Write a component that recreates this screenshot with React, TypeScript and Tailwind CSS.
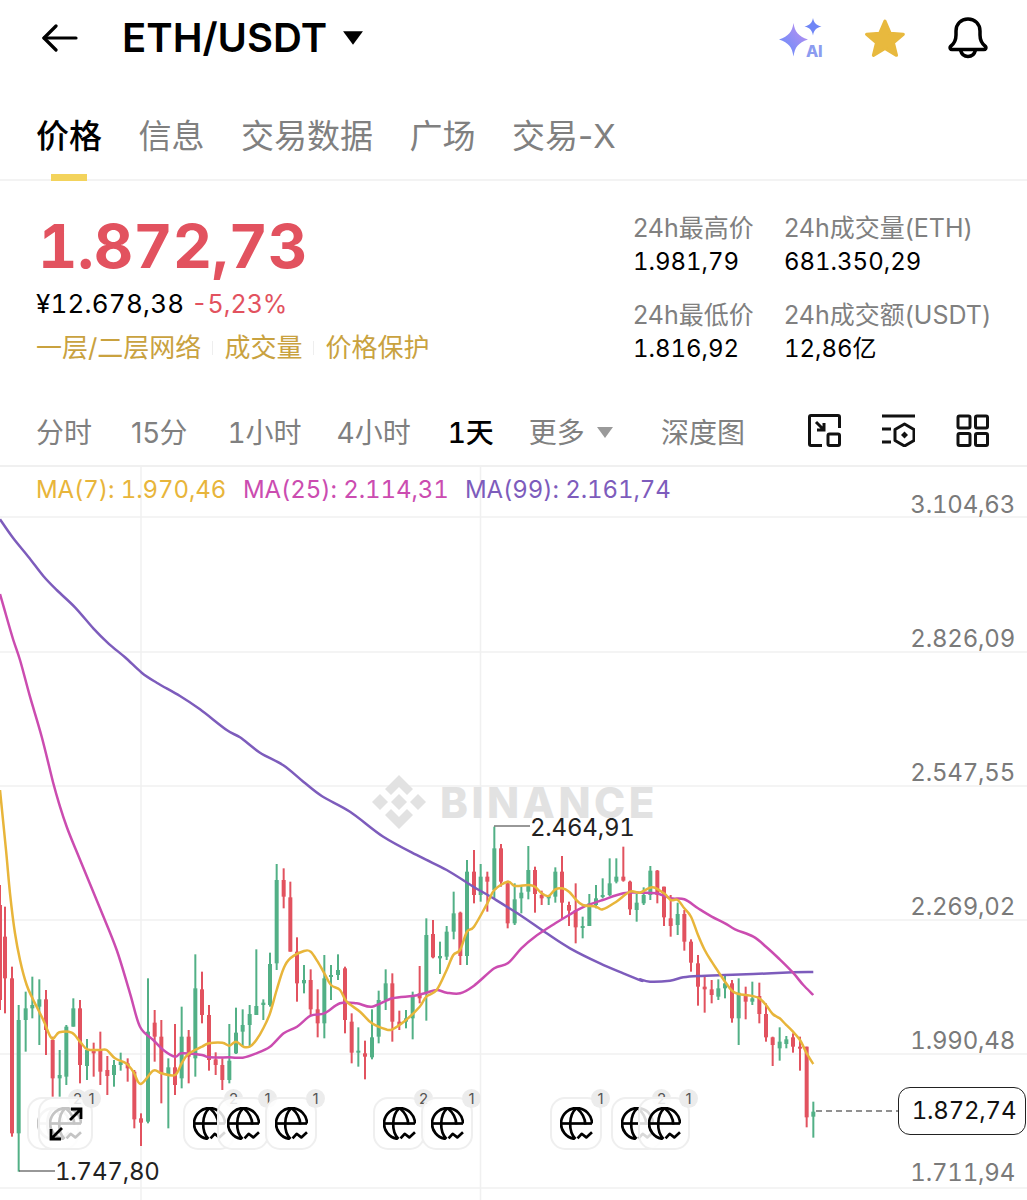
import React from "react";

type C = [number, number, number, number, number, "r" | "g"];

const RED = "#e2525f";
const GREEN = "#52b086";

// Candles as [x, wickTop, wickBottom, bodyTop, bodyBottom, colour] read from three chart crops
const part1: C[] = [
  [15,170,490,260,385,"r"],[36,350,860,385,850,"r"],[56,465,965,510,850,"g"],[77,425,605,475,510,"g"],[97,380,505,465,475,"g"],[118,388,585,448,470,"g"],
  [138,420,615,448,540,"r"],[158,560,740,570,685,"r"],[179,600,740,675,685,"g"],[199,525,705,530,680,"g"],[220,445,530,475,530,"g"],[240,450,700,475,645,"r"],
  [261,567,690,600,648,"g"],[281,578,680,603,610,"r"],[301,545,705,600,665,"r"],[322,618,735,660,678,"r"],[342,630,710,645,675,"g"],[362,608,662,635,645,"g"],
  [383,625,695,640,655,"r"],[403,660,835,665,808,"r"],[423,790,888,805,818,"r"],[444,385,820,545,815,"g"],[464,480,635,518,560,"r"],[484,510,760,560,672,"r"],
  [505,625,835,652,675,"g"],[525,522,735,652,705,"r"],[545,470,715,560,685,"g"],[566,540,700,560,620,"r"],[586,313,680,415,625,"g"],[606,365,520,418,495,"r"],
  [627,465,662,495,630,"r"],[647,607,675,628,645,"r"],[667,625,720,645,690,"r"],[688,522,700,632,690,"g"],[708,473,612,548,610,"g"],[728,478,590,525,545,"g"],
  [749,465,590,492,525,"g"],[769,298,495,468,495,"g"],[790,448,510,458,465,"g"],[810,308,470,342,465,"g"],[830,42,360,90,340,"g"],[851,55,175,90,140,"r"],
  [871,95,305,142,305,"r"],[891,262,455,305,400,"r"],[912,345,430,390,400,"g"],[932,358,495,390,478,"r"],[953,418,562,478,520,"r"],[973,315,565,385,520,"g"],
  [993,345,450,375,380,"g"],[1014,313,390,360,375,"g"],
];
const part2: C[] = [
  [15,440,640,445,600,"r"],[35,580,730,605,698,"r"],[55,622,740,692,698,"g"],[75,662,778,700,710,"r"],[96,568,718,652,712,"g"],[116,512,670,540,650,"g"],
  [137,448,570,490,540,"g"],[157,460,665,490,605,"r"],[178,572,630,605,615,"r"],[198,570,625,595,605,"g"],[218,515,658,525,595,"g"],[239,438,550,520,535,"r"],
  [259,295,602,345,520,"g"],[279,300,415,342,412,"r"],[300,365,462,408,415,"g"],[320,318,420,335,410,"g"],[341,215,358,280,335,"g"],[361,275,435,278,408,"r"],
  [381,120,435,155,408,"g"],[402,90,250,155,225,"r"],[422,132,245,170,225,"g"],[442,155,275,170,185,"r"],[463,20,235,85,210,"g"],[483,72,200,85,185,"r"],
  [503,182,325,190,310,"r"],[524,190,315,238,310,"g"],[544,195,280,218,235,"g"],[565,78,238,150,215,"g"],[585,140,278,150,222,"r"],[605,212,255,225,235,"r"],
  [626,225,255,228,235,"g"],[646,142,248,155,230,"g"],[666,108,300,155,248,"r"],[687,245,318,255,272,"r"],[707,190,370,270,322,"r"],[728,290,355,318,322,"g"],
  [748,222,318,250,318,"g"],[768,195,265,235,255,"g"],[788,175,235,225,230,"g"],[809,115,228,190,225,"g"],[829,115,190,170,185,"g"],[850,80,185,170,182,"r"],
  [870,182,285,185,268,"r"],[890,222,305,248,270,"g"],
];
const part3: C[] = [
  [11,142,195,165,190,"g"],[31,78,180,92,165,"g"],[52,90,190,92,165,"r"],[72,140,258,140,232,"r"],[92,165,290,235,258,"r"],[113,188,285,222,255,"g"],
  [133,210,332,222,305,"r"],[153,298,395,305,368,"r"],[174,345,497,370,440,"r"],[194,405,518,440,448,"r"],[215,420,490,448,465,"r"],[235,418,480,445,470,"g"],
  [255,405,475,430,445,"g"],[276,420,548,430,535,"r"],[296,415,615,458,535,"g"],[317,440,538,468,485,"r"],[337,425,495,475,485,"g"],[358,428,550,468,522,"r"],
  [378,490,605,522,592,"r"],[398,590,678,592,615,"r"],[419,562,662,605,625,"g"],[439,588,625,598,612,"g"],[459,580,638,592,620,"r"],[480,590,692,620,625,"r"],
  [500,620,862,620,832,"r"],[520,785,893,815,830,"g"],
];

const map = (rows: C[], ox: number, oy: number): C[] =>
  rows.map(([x, a, b, c, d, k]) => [ox + x / 3, oy + a / 3, oy + b / 3, oy + c / 3, oy + d / 3, k]);

const candles: C[] = [
  [0, 885, 1010, 905, 1000, "r"],
  ...map(part1, 0, 850),
  ...map(part2, 340, 820),
  ...map(part3, 640, 840),
];

const pts = (rows: number[][], ox: number, oy: number) => rows.map(([x, y]) => [ox + x / 3, oy + y / 3]);

// Smooth line through the points (Catmull-Rom to Bezier)
const smooth = (p: number[][]) => {
  let d = `M${p[0][0].toFixed(1)} ${p[0][1].toFixed(1)}`;
  for (let i = 0; i < p.length - 1; i++) {
    const a = p[Math.max(i - 1, 0)];
    const b = p[i];
    const c = p[i + 1];
    const e = p[Math.min(i + 2, p.length - 1)];
    const c1x = b[0] + (c[0] - a[0]) / 6;
    const c1y = b[1] + (c[1] - a[1]) / 6;
    const c2x = c[0] - (e[0] - b[0]) / 6;
    const c2y = c[1] - (e[1] - b[1]) / 6;
    d += `C${c1x.toFixed(1)} ${c1y.toFixed(1)} ${c2x.toFixed(1)} ${c2y.toFixed(1)} ${c[0].toFixed(1)} ${c[1].toFixed(1)}`;
  }
  return d;
};

const yellow = [
  ...pts([[0,870],[18,1050]],0,500),
  ...pts([[30,130],[45,250],[60,330],[80,405],[100,450],[130,510],[155,565],[178,547],[215,548],[240,575],[262,598],[300,600],[320,600],[345,625],[378,640],[400,665],[422,702],[460,662],[484,670],[525,675],[545,640],[565,612],[606,590],[627,580],[667,578],[688,587],[708,575],[730,590],[749,590],[769,570],[790,535],[810,490],[830,420],[851,355],[871,325],[912,303],[932,305],[953,335],[973,370],[993,405]],0,850),
  ...pts([[0,510],[20,545],[60,575],[96,610],[137,628],[157,628],[198,600],[239,560],[259,530],[290,510],[320,450],[340,405],[360,390],[381,335],[402,320],[442,250],[463,210],[503,185],[524,198],[565,195],[585,200],[605,220],[626,228],[646,208],[666,205],[687,215],[707,238],[728,255],[768,260],[788,268],[829,245],[870,215]],340,820),
  ...pts([[0,158],[37,142],[72,160],[92,180],[113,180],[133,205],[153,230],[174,285],[194,330],[215,365],[235,395],[255,425],[276,452],[296,462],[317,465],[337,468],[358,475],[378,495],[398,522],[419,535],[439,555],[459,575],[480,600],[500,640],[520,672]],640,840),
];
const magenta = [
  ...pts([[0,282],[18,345],[40,420],[60,480],[90,590],[125,710],[160,850],[180,920],[200,980]],0,500),
  ...pts([[228,0],[300,175],[350,300],[390,430],[420,530],[460,570],[490,600],[525,620],[545,610],[606,615],[627,622],[688,622],[728,623],[769,610],[810,590],[851,550],[891,530],[932,497],[973,490]],0,850),
  ...pts([[0,550],[50,550],[96,560],[157,535],[218,528],[259,518],[290,510],[320,518],[361,520],[402,497],[463,445],[503,430],[544,385],[585,350],[646,310],[687,285],[728,262],[788,240],[850,220]],340,820),
  ...pts([[0,158],[50,160],[92,175],[133,178],[174,205],[215,230],[255,250],[285,268],[340,290],[378,320],[419,358],[459,398],[490,435],[520,465]],640,840),
];
const purple = [
  ...pts([[0,58],[40,115],[85,170],[130,228],[170,270],[225,322],[280,385],[325,430],[375,472],[425,518],[470,548],[540,588],[600,628],[680,690],[720,712],[780,758],[850,796],[910,845],[965,888],[1050,935]],0,500),
  ...pts([[130,50],[240,110],[320,150],[400,200],[460,235],[540,285],[620,340],[690,385],[780,430],[850,460],[905,482]],340,820),
  ...pts([[0,418],[30,425],[90,422],[130,412],[174,408],[255,405],[340,402],[459,397],[520,396]],640,840),
];

const gridY = [517, 652, 786, 920, 1054, 1188];
const axis = [
  ["3.104,63", 505], ["2.826,09", 639], ["2.547,55", 773], ["2.269,02", 907], ["1.990,48", 1041], ["1.711,94", 1173],
] as const;

function Globe({ faded }: { faded?: boolean }) {
  return (
    <svg width="33" height="33" viewBox="0 0 32 32" fill="none" stroke={faded ? "#c4c4c4" : "#000"} strokeWidth="2.600">
      <path d="M31 16A15 15 0 1 0 14 30.900" />
      <path d="M16 1C8 8 8 24 15 31" />
      <path d="M16 1C22 6 24.500 12 24.500 17" />
      <path d="M1.500 16H31" />
      <path d="M17 30.500L21 26L25.500 29.500L31 24.500" strokeLinejoin="round" />
    </svg>
  );
}

function GlobeButton({ left, width = 52, faded, badge }: { left: number; width?: number; faded?: boolean; badge: number }) {
  return (
    <div
      className="absolute top-[630px] flex h-[53px] items-center justify-center rounded-[15px] border-2 border-[#efefef] bg-white/85"
      style={{ left, width }}
    >
      <Globe faded={faded} />
      <div className="absolute right-[-10px] top-[-10px] flex h-[19px] w-[19px] items-center justify-center rounded-full bg-[#ececec] text-[15px] leading-none text-[#555]">
        {badge}
      </div>
    </div>
  );
}

export default function App() {
  return (
    <div className="h-[1200px] w-[1027px] overflow-hidden bg-white font-['Inter','Noto_Sans_CJK_SC',sans-serif] text-black">
      {/* Header */}
      <header className="flex h-[76px] items-center pl-[42px] pr-[39px]">
        <svg width="36" height="28" viewBox="0 0 36 28" fill="none" stroke="#000" strokeWidth="3.200" strokeLinecap="round" strokeLinejoin="round">
          <path d="M14 2L2 14L14 26" />
          <path d="M2 14H34" />
        </svg>
        <h1 className="ml-[44px] text-[40px] font-semibold leading-none">ETH/USDT</h1>
        <svg className="ml-[15px]" width="22" height="16" viewBox="0 0 21 15">
          <path d="M1 1H20L10.500 14Z" fill="#000" />
        </svg>
        <div className="ml-auto flex items-center">
          <div className="relative h-[40px] w-[44px]">
            <svg width="44" height="40" viewBox="0 0 44 40">
              <defs>
                <linearGradient id="ai" x1="0" y1="1" x2="1" y2="0">
                  <stop offset="0" stopColor="#5e8cfc" />
                  <stop offset="1" stopColor="#c490ee" />
                </linearGradient>
              </defs>
              <path d="M14.500 5C16 14 19 18 29 21.500C19 25 16 29 14.500 38.500C13 29 10 25 0 21.500C10 18 13 14 14.500 5Z" fill="url(#ai)" />
              <path d="M34 0C35 5 37 7 42.500 8.500C37 10 35 12 34 17.500C33 12 31 10 25.500 8.500C31 7 33 5 34 0Z" fill="#6f86f6" />
            </svg>
            <span className="absolute bottom-[-1px] right-[1px] text-[16px] font-extrabold leading-none tracking-[-0.5px] text-[#8c9cf0]">AI</span>
          </div>
          <svg className="ml-[41px]" width="44" height="40" viewBox="1 0 42 38">
            <path d="M21 3L26 14.500L38.500 15.500L29 23.500L32 35.500L21 29L10 35.500L13 23.500L3.500 15.500L16 14.500Z" fill="#e8b93e" stroke="#e8b93e" strokeWidth="3" strokeLinejoin="round" />
          </svg>
          <svg className="ml-[40px]" width="40" height="42" viewBox="0 0 40 42" fill="none" stroke="#000" strokeWidth="3.500" strokeLinejoin="round">
            <path d="M2.500 29.500C6.500 26.500 8 23 8 18V14C8 7 13 2 20 2C27 2 32 7 32 14V18C32 23 33.500 26.500 37.500 29.500C38.500 31 37.500 32.500 36 32.500H4C2.500 32.500 1.500 31 2.500 29.500Z" />
            <path d="M12.500 33C13.500 37 16.500 39.500 20 39.500C23.500 39.500 26.500 37 27.500 33" />
          </svg>
        </div>
      </header>

      {/* Tabs */}
      <nav className="flex h-[105px] gap-[36.500px] border-b-2 border-[#f3f3f3] pl-[36px] pt-[38px] text-[33px] leading-[44px] text-[#808080]">
        <div className="relative font-medium text-black">
          价格
          <div className="absolute left-[15px] top-[60px] h-[7px] w-[36px] bg-[#f3d35c]" />
        </div>
        <div>信息</div>
        <div>交易数据</div>
        <div>广场</div>
        <div>交易-X</div>
      </nav>

      {/* Price and 24h stats */}
      <section className="flex h-[215px] justify-between pl-[36px] pr-[36px] pt-[29px]">
        <div>
          <div className="ml-[2px] text-[61px] font-bold tabular-nums leading-[72px] text-[#e2525f]">1.872,73</div>
          <div className="mt-[6px] flex items-center text-[26px] tabular-nums leading-[32px] tracking-[0.2px]">
            <span>¥12.678,38</span>
            <span className="ml-[7px] text-[25px] tracking-normal text-[#e2525f]">-5,23%</span>
          </div>
          <div className="mt-[11px] flex items-center text-[26px] leading-[34px] text-[#c9a23f]">
            <span>一层/二层网络</span>
            <span className="mx-[11px] h-[14px] w-px bg-[#eee]" />
            <span>成交量</span>
            <span className="mx-[11px] h-[14px] w-px bg-[#eee]" />
            <span>价格保护</span>
          </div>
        </div>
        <div className="mt-[1px] grid grid-cols-[151px_auto] text-[25px] leading-[34px]">
          <div>
            <div className="text-[#808080]">24h最高价</div>
            <div className="text-[24px] tabular-nums">1.981,79</div>
            <div className="mt-[19px] text-[#808080]">24h最低价</div>
            <div className="text-[24px] tabular-nums">1.816,92</div>
          </div>
          <div>
            <div className="text-[#808080]">24h成交量(ETH)</div>
            <div className="text-[24px] tabular-nums">681.350,29</div>
            <div className="mt-[19px] text-[#808080]">24h成交额(USDT)</div>
            <div className="text-[24px] tabular-nums">12,86亿</div>
          </div>
        </div>
      </section>

      {/* Timeframes */}
      <div className="flex h-[71px] items-center border-b-2 border-[#f0f0f0] pl-[36px] pr-[38px] text-[28px] text-[#808080]">
        <div className="flex items-center pt-[4px]">
          <span>分时</span>
          <span className="ml-[39px]">15分</span>
          <span className="ml-[40px] tabular-nums">1小时</span>
          <span className="ml-[35px]">4小时</span>
          <span className="ml-[37px] font-medium tabular-nums text-black">1天</span>
          <span className="ml-[35px]">更多</span>
          <svg className="ml-[12px]" width="16" height="12" viewBox="0 0 16 12">
            <path d="M0 0H16L8 11Z" fill="#9a9a9a" />
          </svg>
          <span className="ml-[48px]">深度图</span>
        </div>
        <div className="ml-auto flex gap-[41px]">
          <svg width="33" height="33" viewBox="0 0 33 33" fill="none" stroke="#111" strokeWidth="3">
            <path d="M14 31.500H3C2 31.500 1.500 31 1.500 30V3C1.500 2 2 1.500 3 1.500H30C31 1.500 31.500 2 31.500 3V14" />
            <rect x="20" y="20" width="11.500" height="11.500" rx="1.500" />
            <path d="M8 8L16 16M9 16H16V9" />
          </svg>
          <svg width="33" height="33" viewBox="0 0 33 33" fill="none" stroke="#111" strokeWidth="3">
            <path d="M0 2H33M0 15H9M0 28H9" />
            <path d="M22.500 10L32 15.500V26.500L22.500 32L13 26.500V15.500Z" strokeLinejoin="round" />
            <path d="M22.500 17.500L26 21L22.500 24.500L19 21Z" fill="#111" stroke="none" />
          </svg>
          <svg width="33" height="33" viewBox="0 0 33 33" fill="none" stroke="#111" strokeWidth="3">
            <rect x="2" y="2" width="12" height="12" rx="1.500" />
            <rect x="19.500" y="2" width="12" height="12" rx="1.500" />
            <rect x="2" y="19.500" width="12" height="12" rx="1.500" />
            <rect x="19.500" y="19.500" width="12" height="12" rx="1.500" />
          </svg>
        </div>
      </div>

      {/* Chart */}
      <div className="relative h-[733px] w-full">
        <svg className="absolute inset-0" width="1027" height="733" viewBox="0 467 1027 733" fill="none">
          {gridY.map((y) => (
            <line key={y} x1="0" x2="1027" y1={y} y2={y} stroke="#f0f0f0" strokeWidth="1.500" />
          ))}
          <line x1="141" x2="141" y1="467" y2="1200" stroke="#f0f0f0" strokeWidth="1.500" />
          <line x1="480.500" x2="480.500" y1="467" y2="1200" stroke="#f0f0f0" strokeWidth="1.500" />

          {/* Watermark mark */}
          <g fill="#e2e2e2">
            <path d="M399 775L413 789L407 795L399 787L391 795L385 789Z" />
            <path d="M399 829L385 815L391 809L399 817L407 809L413 815Z" />
            <path d="M399 794L407 802L399 810L391 802Z" />
            <path d="M380 794L388 802L380 810L372 802Z" />
            <path d="M418 794L426 802L418 810L410 802Z" />
          </g>

          {candles.map(([x, a, b, c, d, k], i) => (
            <g key={i} fill={k === "r" ? RED : GREEN}>
              <rect x={x - 1} y={a} width="2" height={b - a} />
              <rect x={x - 2} y={c} width="4" height={Math.max(d - c, 2)} />
            </g>
          ))}

          <path d={smooth(purple)} stroke="#7d5cbc" strokeWidth="2.500" />
          <path d={smooth(magenta)} stroke="#cb4cb0" strokeWidth="2.500" />
          <path d={smooth(yellow)} stroke="#e8b53a" strokeWidth="2.500" />

          <path d="M19 1171H55" stroke="#333" strokeWidth="1.200" />
          <path d="M494 826H530" stroke="#333" strokeWidth="1.200" />
          <path d="M816 1111H898" stroke="#222" strokeWidth="1.200" strokeDasharray="6 4" />
        </svg>

        {/* Watermark text */}
        <div className="absolute left-[440px] top-[321px] text-[42px] font-extrabold leading-[30px] tracking-[3.500px] text-[#e2e2e2]">BINANCE</div>

        {/* MA legend */}
        <div className="absolute left-[36px] top-[9px] flex text-[24px] tabular-nums leading-[28px] tracking-[-0.1px]">
          <span className="w-[207px] text-[#e8b53a]">MA(7): 1.970,46</span>
          <span className="w-[222px] text-[#cb4cb0]">MA(25): 2.114,31</span>
          <span className="text-[#7d5cbc]">MA(99): 2.161,74</span>
        </div>

        {/* Y axis */}
        {axis.map(([label, y]) => (
          <div
            key={label}
            className="absolute right-[12px] text-[24px] tabular-nums leading-[28px] tracking-[-0.2px] text-[#7a7a7a]"
            style={{ top: y - 467 - 14 }}
          >
            {label}
          </div>
        ))}

        {/* Markers: each covers the badge of the one before it */}
        <GlobeButton left={27} faded badge={2} />
        <GlobeButton left={38} width={55} faded badge={1} />
        <GlobeButton left={183} badge={2} />
        <GlobeButton left={217} badge={1} />
        <GlobeButton left={265} badge={1} />
        <GlobeButton left={373} badge={2} />
        <GlobeButton left={421} badge={1} />
        <GlobeButton left={550} badge={1} />
        <GlobeButton left={611} badge={2} />
        <GlobeButton left={638} badge={1} />

        {/* Expand button */}
        <div className="absolute left-[38px] top-[630px] flex h-[53px] w-[55px] items-center justify-center rounded-[15px]">
          <svg width="34" height="34" viewBox="0 0 34 34" fill="none" stroke="#000" strokeWidth="2.800">
            <path d="M2 32L13 21M2 22V32H12" />
            <path d="M32 2L21 13M22 2H32V12" />
          </svg>
        </div>

        {/* Price tags */}
        <div className="absolute left-[55px] top-[695px] text-[24px] tabular-nums leading-[20px] tracking-[-0.2px] text-[#222]">1.747,80</div>
        <div className="absolute left-[530px] top-[351px] text-[24px] tabular-nums leading-[20px] tracking-[-0.2px] text-[#222]">2.464,91</div>
        <div className="absolute left-[898px] top-[620px] flex h-[48px] w-[128px] items-center justify-center rounded-[12px] border border-[#222] bg-white pl-[4px] text-[24px] tabular-nums tracking-[-0.2px] text-[#111]">
          1.872,74
        </div>
      </div>
    </div>
  );
}
